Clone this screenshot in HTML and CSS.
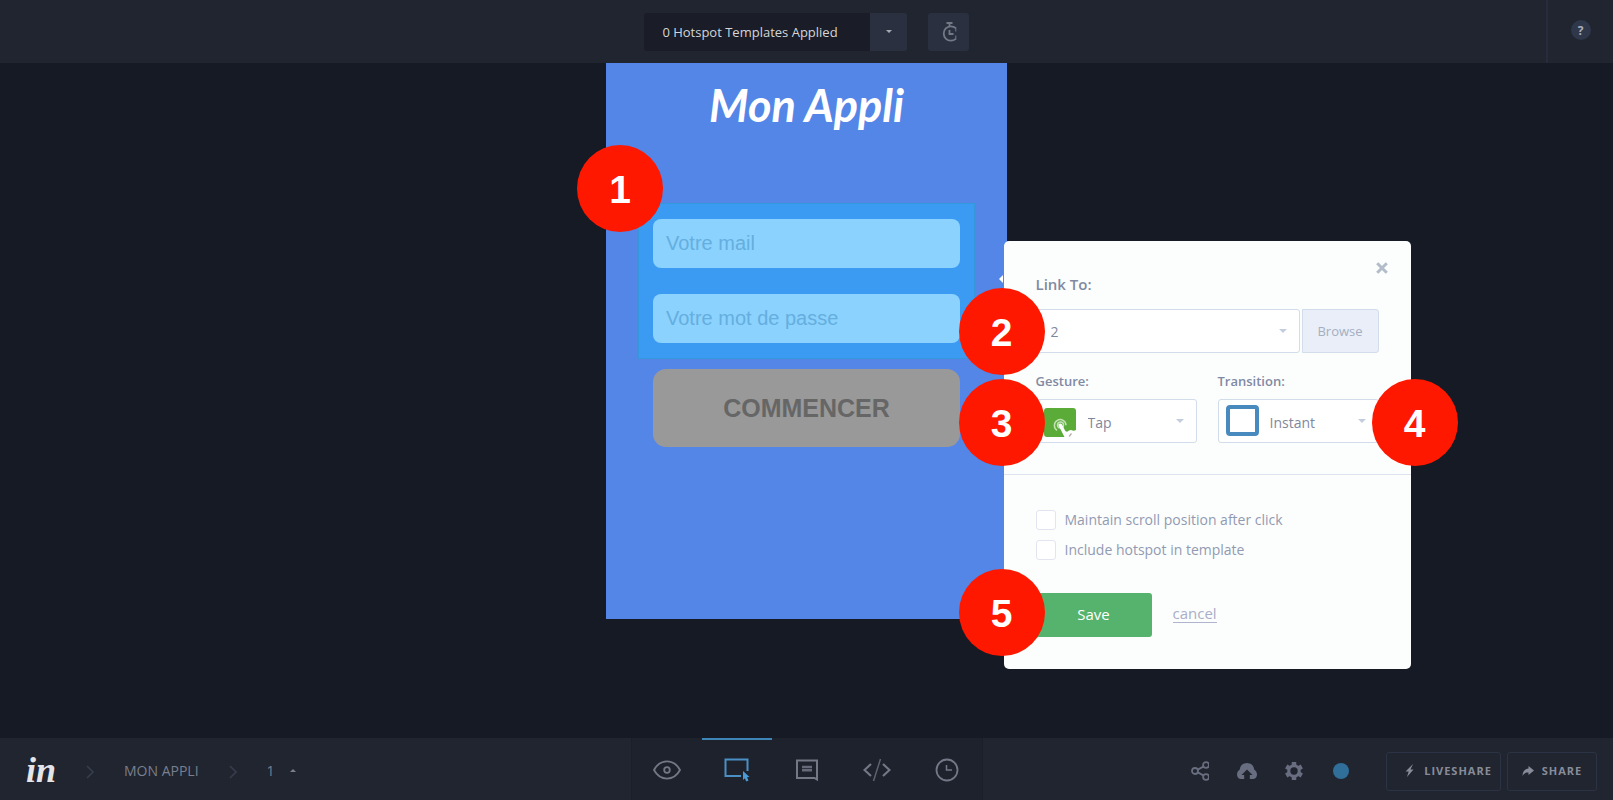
FILE: index.html
```html
<!DOCTYPE html>
<html lang="fr">
<head>
  <meta charset="UTF-8" />
  <meta name="viewport" content="width=device-width, initial-scale=1.0"/>
  <title>Mon Appli - Hotspots</title>
  <link rel="stylesheet" href="styles.css">
</head>
<body>
  <header class="topbar">
    <div class="templates">
      <button class="templates-name">0 Hotspot Templates Applied</button>
      <button class="templates-toggle" aria-label="Templates"><span class="caret"></span></button>
    </div>
    <button class="timer" aria-label="Timer">
      <svg width="16" height="20" viewBox="0 0 16 20" fill="none" stroke="#747986" stroke-width="1.8">
        <path d="M14.800 6.200A7.200 7.200 0 1 0 14.800 16.800"/>
        <path d="M14.800 5.500v4M14.800 13.500v4" stroke-width="1"/>
        <path d="M5.500 1h6M8.500 1v3M8.500 8v4h4"/>
      </svg>
    </button>
    <div class="help">
      <button class="help-btn">?</button>
    </div>
  </header>

  <main class="stage">
    <div class="screen">
      <h1 class="app-title">Mon Appli</h1>
      <div class="hotspot">
        <input class="field" type="text" placeholder="Votre mail" aria-label="Votre mail" />
        <input class="field" type="text" placeholder="Votre mot de passe" aria-label="Votre mot de passe" />
        <span class="marker marker-hotspot">1</span>
      </div>
      <button class="start">COMMENCER</button>
    </div>

    <form class="popup">
      <button type="button" class="close" aria-label="Close">
        <svg width="12" height="12" viewBox="0 0 12 12" stroke="#b3bcc9" stroke-width="3"><path d="M1.2 1.2l9.6 9.6M10.8 1.2l-9.6 9.6"/></svg>
      </button>
      <div class="popup-main">
        <label class="label label-link" for="link">Link To:</label>
        <div class="link-row">
          <div class="select select-link">
            <select id="link"><option>2</option></select>
          </div>
          <button type="button" class="browse">Browse</button>
          <span class="marker marker-left">2</span>
        </div>
        <div class="options">
          <div class="option">
            <label class="label" for="gesture">Gesture:</label>
            <div class="select select-icon">
              <select id="gesture"><option>Tap</option></select>
              <svg class="icon icon-tap" width="32" height="29" viewBox="0 0 32 29">
                <path d="M0 3a3 3 0 0 1 3-3h26a3 3 0 0 1 3 3v19l-4 2-2 5H3a3 3 0 0 1-3-3z" fill="#5bab38"/>
                <g fill="none" stroke="#c4e2b6" stroke-width="1.5"><path d="M13 22.300a5.800 5.800 0 1 1 9-5"/><circle cx="16.500" cy="17" r="3"/></g>
                <path d="M14.300 17c.5-2 3-2 3.800-.3l3.200 6.300c1.500 1 2.700.8 3.700-.5 1.500-1 3-.5 4 .3H32v3l-4 3.200h-7.500z" fill="#fff"/>
                <path d="M25 28.500l2.500-3" stroke="#b9a9a9" stroke-width="1.200"/>
              </svg>
              <span class="marker marker-left">3</span>
            </div>
          </div>
          <div class="option">
            <label class="label" for="transition">Transition:</label>
            <div class="select select-icon">
              <select id="transition"><option>Instant</option></select>
              <span class="icon icon-instant"></span>
              <span class="marker marker-right">4</span>
            </div>
          </div>
        </div>
      </div>
      <div class="popup-foot">
        <label class="check"><input type="checkbox" /> Maintain scroll position after click</label>
        <label class="check"><input type="checkbox" /> Include hotspot in template</label>
        <div class="actions">
          <button type="button" class="save">Save</button>
          <a class="cancel" href="#">cancel</a>
          <span class="marker marker-save">5</span>
        </div>
      </div>
    </form>
  </main>

  <footer class="bottombar">
    <div class="crumbs">
      <a class="logo" href="#">in</a>
      <svg class="sep" width="8" height="14" viewBox="0 0 8 14" fill="none" stroke="#363d4c" stroke-width="1.6"><path d="M1 1l6 6-6 6"/></svg>
      <a class="crumb" href="#">MON APPLI</a>
      <svg class="sep" width="8" height="14" viewBox="0 0 8 14" fill="none" stroke="#363d4c" stroke-width="1.6"><path d="M1 1l6 6-6 6"/></svg>
      <a class="crumb" href="#">1</a>
      <span class="caret caret-up"></span>
    </div>

    <nav class="modes">
      <button class="mode" aria-label="Preview">
        <svg width="28" height="20" viewBox="0 0 28 20" fill="none" stroke="#747886" stroke-width="1.8"><path d="M1 10C4 4.500 8.500 1.400 14 1.400S24 4.500 27 10c-3 5.500-7.500 8.600-13 8.600S4 15.500 1 10z"/><circle cx="14" cy="10" r="2.800"/></svg>
      </button>
      <button class="mode active" aria-label="Build">
        <svg width="26" height="24" viewBox="0 0 26 24"><path d="M17 18H1.500V1.500h22V13" fill="none" stroke="#4a90c4" stroke-width="2"/><path d="M19 13l6.500 6-2.500.3 1.500 3.200-2.200 1-1.500-3.200-1.800 1.700z" fill="#4a9bd6"/></svg>
      </button>
      <button class="mode" aria-label="Comment">
        <svg width="22" height="22" viewBox="0 0 22 22" fill="none" stroke="#747886" stroke-width="2"><path d="M1 1.500h20v19L18.500 19H1z"/><path d="M6 8h10M6 11.200h10" stroke-width="2.600" stroke="#666a78"/></svg>
      </button>
      <button class="mode" aria-label="Inspect">
        <svg width="28" height="24" viewBox="0 0 28 24" fill="none" stroke="#747886" stroke-width="2.200"><path d="M8 6l-6.500 6L8 18M20 6l6.500 6-6.500 6"/><path d="M17.500 1l-7 22" stroke-width="1.500" stroke="#5d6270"/></svg>
      </button>
      <button class="mode" aria-label="History">
        <svg width="24" height="24" viewBox="0 0 24 24" fill="none" stroke="#747886" stroke-width="1.800"><circle cx="12" cy="12" r="10.500"/><path d="M11.500 7v5h5.500" stroke-width="1.500"/></svg>
      </button>
    </nav>

    <div class="tools">
      <button class="tool" aria-label="Connections">
        <svg width="18" height="20" viewBox="0 0 18 20" fill="none" stroke="#686d7f" stroke-width="1.800"><circle cx="4" cy="10" r="3"/><circle cx="15" cy="4" r="2.900"/><circle cx="15" cy="16" r="2.900"/><path d="M6.800 8.600l6-3.200M6.800 11.400l6 3.200"/></svg>
      </button>
      <button class="tool" aria-label="Upload">
        <svg width="20" height="18" viewBox="0 0 20 18"><path d="M3.500 17C1.200 16.500 0 14.800 0 12.500c0-2.300 1.200-4 2.800-5C3 3.800 6 1 10 1s7 2.800 7.200 6.500c1.600 1 2.800 2.700 2.800 5 0 2.300-1.200 4-3.500 4.500h-3.700v-4h2.700L10 7.500 4.500 13h2.700v4z" fill="#686d7f"/></svg>
      </button>
      <button class="tool" aria-label="Settings">
        <svg width="18" height="18" viewBox="0 0 18 18"><g stroke="#686d7f" stroke-width="4.500"><path d="M9 0v18M1.200 4.500l15.600 9M1.200 13.500l15.600-9"/></g><circle cx="9" cy="9" r="6.800" fill="#686d7f"/><circle cx="9" cy="9" r="3.700" fill="#20242f"/></svg>
      </button>
      <button class="tool" aria-label="Status"><span class="dot"></span></button>
      <div class="shares">
        <button class="share share-live">
          <svg width="9" height="13" viewBox="0 0 9 13"><path d="M8 0L.500 7.500h3.200L2 13l6.500-7.500H5.500z" fill="#888c9a"/></svg>
          LIVESHARE
        </button>
        <button class="share">
          <svg width="12" height="11" viewBox="0 0 12 11"><path d="M6.500 1l5.500 4.500L6.500 10V7.500C3.500 7.400 2 8.500.500 11 .500 6.500 3 3.700 6.500 3.500z" fill="#888c9a"/></svg>
          SHARE
        </button>
      </div>
    </div>
  </footer>
</body>
</html>
```
FILE: styles.css
```css
* {
  box-sizing: border-box;
}

html, body {
  height: 100%;
  margin: 0;
}

body {
  display: flex;
  flex-direction: column;
  background: #161a24;
  font-family: "Open Sans", sans-serif;
  font-size: 14px;
}

button, input, select {
  margin: 0;
  padding: 0;
  border: 0;
  background: none;
  font-family: inherit;
  font-size: inherit;
}

button, select {
  cursor: pointer;
}

svg {
  display: block;
}

.caret {
  width: 0;
  border: 3px solid transparent;
  border-top-color: #a5a9b3;
  border-bottom: 0;
}

/* top bar */
.topbar {
  position: relative;
  display: flex;
  flex: none;
  justify-content: center;
  align-items: center;
  gap: 21px;
  height: 63px;
  background: #20252f;
}

.templates {
  display: flex;
  height: 38px;
}

.templates-name {
  width: 226px;
  padding-right: 14px;
  border-radius: 3px 0 0 3px;
  background: #1a1d27;
  color: #d3d5da;
  font-size: 13px;
  font-weight: 500;
}

.templates-toggle {
  display: flex;
  justify-content: center;
  align-items: center;
  width: 37px;
  border-radius: 0 3px 3px 0;
  background: #2a3040;
}

.timer {
  display: flex;
  justify-content: center;
  align-items: center;
  width: 41px;
  height: 38px;
  border-radius: 3px;
  background: #2a3040;
}

.help {
  position: absolute;
  top: 0;
  right: 0;
  bottom: 0;
  display: flex;
  justify-content: center;
  align-items: center;
  width: 67px;
  padding-bottom: 3px;
  border-left: 2px solid #262c3b;
}

.help-btn {
  width: 20px;
  height: 20px;
  border-radius: 50%;
  background: #2f374b;
  color: #aaaeb8;
  font-size: 12px;
  font-weight: 700;
}

/* screen being edited */
.stage {
  position: relative;
  flex: 1;
  min-height: 675px;
}

.screen {
  display: flex;
  flex-direction: column;
  width: 401px;
  height: 556px;
  margin: 0 auto;
  padding: 12px 32px;
  background: #5386e6;
}

.app-title {
  margin: 0 0 68px;
  color: #fff;
  font-family: Lato, sans-serif;
  font-size: 45px;
  font-style: italic;
  font-weight: 700;
  line-height: 60px;
  text-align: center;
}

.hotspot {
  position: relative;
  display: flex;
  flex-direction: column;
  gap: 26px;
  padding: 15px 14px;
  border: 1px solid #3598dc;
  background: #3b9af2;
}

.field {
  height: 49px;
  padding: 0 13px;
  border-radius: 8px;
  background: #8bd2ff;
  color: #5ba6d6;
  font-family: "Liberation Sans", sans-serif;
  font-size: 20px;
}

.field::placeholder {
  color: #65aede;
  opacity: 1;
}

.start {
  height: 78px;
  margin: 10px 15px 0;
  border-radius: 13px;
  background: #999;
  color: #666;
  font-family: "Liberation Sans", sans-serif;
  font-size: 25px;
  font-weight: 700;
}

/* numbered markers */
.marker {
  position: absolute;
  width: 86px;
  height: 87px;
  border-radius: 50%;
  background: #ff1800;
  color: #fff;
  font-family: "Liberation Sans", sans-serif;
  font-size: 39px;
  font-weight: 700;
  line-height: 90px;
  text-align: center;
}

.marker-hotspot {
  top: -59px;
  left: -62px;
}

.marker-left {
  top: -21px;
  left: -77px;
}

.marker-right {
  top: -21px;
  right: -79px;
}

.marker-save {
  top: -24px;
  left: -77px;
}

/* hotspot popup */
.popup {
  position: absolute;
  top: 178px;
  left: calc(50% + 197px);
  width: 407px;
  border-radius: 5px;
  background: #fcfefd;
  color: #8189a3;
}

.popup::before {
  content: "";
  position: absolute;
  top: 34px;
  left: -5px;
  border: 4px solid transparent;
  border-right-color: #fff;
  border-left: 0;
}

.close {
  position: absolute;
  top: 21px;
  right: 23px;
}

.popup-main {
  padding: 31px 32px 31px;
  border-bottom: 1px solid #dfe3f0;
}

.label {
  display: block;
  font-size: 13px;
  font-weight: 600;
  line-height: 20px;
}

.label-link {
  font-size: 15px;
  line-height: 24px;
}

.link-row {
  position: relative;
  display: flex;
  gap: 2px;
  margin-top: 13px;
}

.select {
  position: relative;
}

.select::after {
  content: "";
  position: absolute;
  top: 20px;
  right: 13px;
  border: 4px solid transparent;
  border-top-color: #c3cde0;
  border-bottom: 0;
  pointer-events: none;
}

.select-link {
  flex: 1;
}

.select select {
  appearance: none;
  display: block;
  width: 100%;
  height: 44px;
  padding: 0 14px;
  border: 1px solid #d3dcea;
  border-radius: 3px;
  background: #fff;
  color: #7f879c;
}

.select-icon select {
  padding: 2px 0 0 51px;
}

.browse {
  width: 77px;
  border: 1px solid #d3dcea;
  border-radius: 0 3px 3px 0;
  background: #eaeef8;
  color: #a3aec2;
  font-size: 13px;
}

.options {
  display: flex;
  gap: 21px;
  margin-top: 18px;
}

.option {
  flex: 1;
}

.option .select {
  margin-top: 8px;
}

.option .marker {
  top: -20px;
}

.icon {
  position: absolute;
  pointer-events: none;
}

.icon-tap {
  top: 9px;
  left: 8px;
}

.icon-instant {
  top: 6px;
  left: 8px;
  width: 33px;
  height: 31px;
  border: 4px solid #488abd;
  border-radius: 4px;
  background: #fff;
}

.popup-foot {
  padding: 35px 32px 32px;
}

.check {
  display: flex;
  align-items: center;
  gap: 9px;
  height: 20px;
  margin-bottom: 10px;
  color: #929ab2;
  line-height: 18px;
}

.check input {
  appearance: none;
  width: 20px;
  height: 20px;
  border: 1px solid #e2e5f0;
  border-radius: 3px;
  background: #fff;
}

.actions {
  position: relative;
  display: flex;
  align-items: center;
  gap: 21px;
  margin-top: 33px;
}

.save {
  width: 116px;
  height: 44px;
  padding-bottom: 2px;
  border-radius: 3px;
  background: #55b36d;
  color: #fff;
  font-size: 15px;
  font-weight: 500;
}

.cancel {
  margin-bottom: 3px;
  border-bottom: 1px solid #b0b5cf;
  color: #a9aec8;
  font-size: 15px;
  line-height: 17px;
  text-decoration: none;
}

/* bottom bar */
.bottombar {
  display: flex;
  flex: none;
  height: 62px;
  background: #20252f;
}

.crumbs {
  display: flex;
  flex: 1;
  align-items: center;
  padding: 2px 16px 0;
}

.logo {
  width: 60px;
  margin-left: 10px;
  color: #e4e5e8;
  font-family: "Liberation Serif", serif;
  font-size: 36px;
  font-style: italic;
  font-weight: 700;
  line-height: 40px;
  text-decoration: none;
}

.sep {
  margin-top: 4px;
}

.crumb {
  margin: 0 30px;
  color: #7a7f8e;
  text-decoration: none;
}

.crumb + .caret {
  margin-left: -15px;
}

.caret-up {
  border-top: 0;
  border-bottom: 3px solid #7a7f8e;
}

.modes {
  display: flex;
  border: solid #1b1f29;
  border-width: 0 1px;
  background: #1e222d;
}

.mode {
  display: flex;
  justify-content: center;
  align-items: center;
  width: 70px;
  border-top: 2px solid #1e222d;
}

.mode.active {
  border-top-color: #3f86b8;
}

.tools {
  display: flex;
  flex: 1;
  justify-content: flex-end;
  align-items: center;
  gap: 27px;
  padding: 4px 16px 0;
}

.tool {
  display: flex;
  justify-content: center;
  width: 20px;
}

.dot {
  width: 16px;
  height: 16px;
  border-radius: 50%;
  background: #306f9a;
}

.shares {
  display: flex;
  gap: 6px;
  margin-left: 8px;
}

.share {
  display: flex;
  align-items: center;
  justify-content: center;
  gap: 8px;
  width: 90px;
  height: 39px;
  padding-bottom: 2px;
  border: 1px solid #2c3345;
  border-radius: 3px;
  color: #888c9a;
  font-size: 11px;
  font-weight: 700;
  letter-spacing: 1px;
}

.share-live {
  gap: 10px;
  width: 115px;
  padding-left: 10px;
}
```
